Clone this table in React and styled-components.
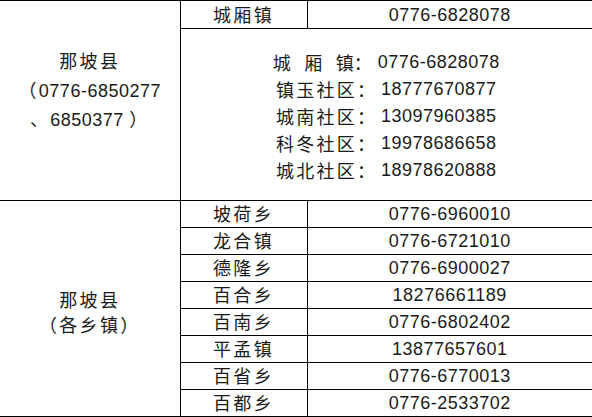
import React from "react";
import styled, { createGlobalStyle } from "styled-components";

const GlobalStyle = createGlobalStyle`
  html, body {
    margin: 0;
    padding: 0;
    background: #ffffff;
  }
  body {
    font-family: "Liberation Sans", "Noto Sans CJK SC", sans-serif;
    font-size: 18px;
    color: #1a1a1a;
  }
`;

const Sheet = styled.table`
  width: 592px;
  table-layout: fixed;
  border-collapse: collapse;
  border-top: 1px solid #000;
`;

const Row = styled.tr`
  height: ${(p) => p.$h}px;
`;

const Cell = styled.td`
  border: 1px solid #000;
  padding: 0;
  text-align: center;
  vertical-align: middle;
  white-space: nowrap;
  overflow: hidden;
  line-height: 1;
`;

const RegionCell = styled(Cell)`
  border-left: none;
  line-height: ${(p) => p.$lh}px;
  padding-top: ${(p) => p.$pt || 0}px;
  padding-bottom: ${(p) => p.$pb || 0}px;
`;

const PhoneCell = styled(Cell)`
  border-right: none;
`;

const WideCell = styled(Cell)`
  border-right: none;
  padding-top: 3px;
`;

const Name = styled.span`
  font-family: "Noto Sans CJK SC", sans-serif;
  letter-spacing: 2.3px;
`;

const Num = styled.span`
  letter-spacing: 0.5px;
`;

const Line = styled.div`
  display: flex;
  justify-content: center;
  align-items: center;
  height: 27px;
`;

const Label = styled.span`
  display: inline-block;
  width: 81px;
  font-family: "Noto Sans CJK SC", sans-serif;
  text-align: justify;
  text-align-last: justify;
  letter-spacing: ${(p) => (p.$spread ? 0 : 2.3)}px;
`;

const Colon = styled.span`
  font-family: "Noto Sans CJK SC", sans-serif;
  width: 24px;
  text-align: left;
`;

const communities = [
  ["城厢镇", "0776-6828078", true],
  ["镇玉社区", "18777670877"],
  ["城南社区", "13097960385"],
  ["科冬社区", "19978686658"],
  ["城北社区", "18978620888"],
];

const towns = [
  ["坡荷乡", "0776-6960010"],
  ["龙合镇", "0776-6721010"],
  ["德隆乡", "0776-6900027"],
  ["百合乡", "18276661189"],
  ["百南乡", "0776-6802402"],
  ["平孟镇", "13877657601"],
  ["百省乡", "0776-6770013"],
  ["百都乡", "0776-2533702"],
];

export default function App() {
  return (
    <>
      <GlobalStyle />
      <Sheet>
        <colgroup>
          <col style={{ width: 180 }} />
          <col style={{ width: 127 }} />
          <col style={{ width: 285 }} />
        </colgroup>
        <tbody>
          <Row $h={28}>
            <RegionCell rowSpan={2} $lh={27} $pb={20}>
              <Name>那坡县</Name>
              <br />
              <Name>（</Name>
              <Num>0776-6850277</Num>
              <br />
              <Name>、</Name>
              <Num>6850377 </Num>
              <Name>）</Name>
            </RegionCell>
            <Cell>
              <Name>城厢镇</Name>
            </Cell>
            <PhoneCell>
              <Num>0776-6828078</Num>
            </PhoneCell>
          </Row>
          <Row $h={172}>
            <WideCell colSpan={2}>
              {communities.map(([label, phone, spread]) => (
                <Line key={label}>
                  <Label $spread={spread}>{label}</Label>
                  <Colon>：</Colon>
                  <Num>{phone}</Num>
                </Line>
              ))}
            </WideCell>
          </Row>
          {towns.map(([town, phone], i) => (
            <Row $h={27} key={town}>
              {i === 0 && (
                <RegionCell rowSpan={towns.length} $lh={23} $pt={9}>
                  <Name>那坡县</Name>
                  <br />
                  <Name>（各乡镇）</Name>
                </RegionCell>
              )}
              <Cell>
                <Name>{town}</Name>
              </Cell>
              <PhoneCell>
                <Num>{phone}</Num>
              </PhoneCell>
            </Row>
          ))}
        </tbody>
      </Sheet>
    </>
  );
}
